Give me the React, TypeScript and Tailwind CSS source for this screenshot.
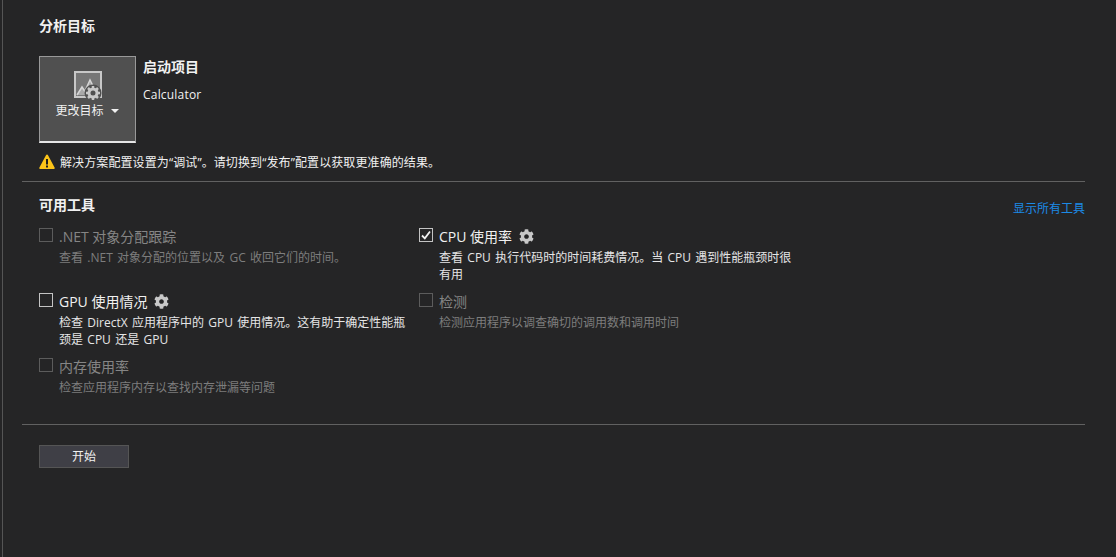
import React from "react";
import { FaCog } from "react-icons/fa";

const FONT = "font-['Open_Sans','Noto_Sans_CJK_SC',sans-serif]";

type Tool = {
  name: string;
  desc: React.ReactNode;
  enabled?: boolean;
  checked?: boolean;
  gear?: boolean;
};

const tools: Tool[] = [
  {
    name: ".NET 对象分配跟踪",
    desc: "查看 .NET 对象分配的位置以及 GC 收回它们的时间。",
  },
  {
    name: "CPU 使用率",
    desc: "查看 CPU 执行代码时的时间耗费情况。当 CPU 遇到性能瓶颈时很有用",
    enabled: true,
    checked: true,
    gear: true,
  },
  {
    name: "GPU 使用情况",
    desc: "检查 DirectX 应用程序中的 GPU 使用情况。这有助于确定性能瓶颈是 CPU 还是 GPU",
    enabled: true,
    gear: true,
  },
  {
    name: "检测",
    desc: "检测应用程序以调查确切的调用数和调用时间",
  },
  {
    name: "内存使用率",
    desc: "检查应用程序内存以查找内存泄漏等问题",
  },
];

const TargetIcon = () => (
  <svg width="30" height="30" viewBox="0 0 30 30" className="block">
    <rect x="3" y="1" width="26" height="25" fill="#767676" stroke="#c8c8c8" strokeWidth="2" />
    <path d="M5 24l5-8 3 4 5-11 6 12v3H5z" fill="#a8a8a8" />
    <path d="M5 24l5-8 4 6M13 20l5-11 6 12" fill="none" stroke="#d6d6d6" strokeWidth="1.500" />
    <circle cx="21" cy="22" r="8.500" fill="#505050" />
    <circle cx="21" cy="22" r="4" fill="#505050" stroke="#c8c8c8" strokeWidth="3" />
    <path
      d="M21 15v3M21 26v3M14 22h3M25 22h3M16 17l2 2M24 25l2 2M26 17l-2 2M18 25l-2 2"
      stroke="#c8c8c8"
      strokeWidth="2.500"
    />
  </svg>
);

const WarningIcon = () => (
  <svg width="16" height="16" viewBox="0 0 16 16" className="block shrink-0">
    <path d="M8 .5c.4 0 .7.2.9.6l6.800 12.700c.3.6-.1 1.200-.8 1.200H1.100c-.7 0-1.100-.6-.8-1.200L7.100 1.100C7.300.7 7.600.5 8 .5z" fill="#fcc419" />
    <rect x="7" y="5" width="2" height="5.500" fill="#1e1e1e" />
    <rect x="7" y="11.500" width="2" height="2" fill="#1e1e1e" />
  </svg>
);

const ToolOption = ({ tool }: { tool: Tool }) => {
  const titleColor = tool.enabled ? "text-[#f1f1f1]" : "text-[#858585]";
  const descColor = tool.enabled ? "text-[#e6e6e6]" : "text-[#7d7d7d]";

  return (
    <div className="flex h-[65px] items-start">
      <div
        className={`mt-[5px] flex h-[14px] w-[14px] shrink-0 items-center justify-center border ${
          tool.enabled ? "border-[#c4c4c4]" : "border-[#5c5c5c]"
        }`}
      >
        {tool.checked && (
          <svg width="10" height="10" viewBox="0 0 10 10">
            <path d="M1 5.500l2.800 2.800L9 1.500" fill="none" stroke="#f1f1f1" strokeWidth="1.800" />
          </svg>
        )}
      </div>
      <div className="ml-[6px] w-[353px]">
        <div className={`flex h-[26px] items-center text-[14px] ${titleColor}`}>
          <span>{tool.name}</span>
          {tool.gear && <FaCog className="ml-[7px] text-[#c8c8c8]" size={15} />}
        </div>
        <p className={`text-[12px] leading-[17px] [word-spacing:1.200px] ${descColor}`}>{tool.desc}</p>
      </div>
    </div>
  );
};

export default function App() {
  return (
    <div className={`h-[557px] w-[1116px] overflow-hidden bg-[#252526] ${FONT}`}>
      <div className="ml-[2px] h-full border-l border-[#555555] pl-[19px] pr-[31px]">
        <section className="pl-[17px] pt-[17px]">
          <h2 className="text-[14px] leading-[18px] font-bold text-[#f1f1f1]">分析目标</h2>
          <div className="mt-[21px] flex">
            <button className="flex h-[87px] w-[97px] flex-col items-center border border-b-2 border-[#999999] border-b-[#e6e6e6] bg-[#505050] pr-[1px] pt-[14px]">
              <TargetIcon />
              <span className="mt-[1px] flex items-center text-[12px] leading-[18px] text-[#f1f1f1]">
                更改目标
                <span className="ml-[7px] h-0 w-0 border-x-[4px] border-t-[4px] border-x-transparent border-t-[#f1f1f1]" />
              </span>
            </button>
            <div className="ml-[7px]">
              <div className="h-[21px] text-[14px] leading-[21px] font-bold text-[#f1f1f1]">启动项目</div>
              <div className="mt-[9px] text-[12px] leading-[18px] tracking-[0.2px] text-[#f1f1f1]">Calculator</div>
            </div>
          </div>
          <div className="mt-[11px] flex h-[16px] items-center">
            <WarningIcon />
            <span className="ml-[5px] pt-[2px] text-[12px] tracking-[0.1px] whitespace-nowrap text-[#f1f1f1]">
              解决方案配置设置为“调试”。请切换到“发布”配置以获取更准确的结果。
            </span>
          </div>
        </section>

        <hr className="mt-[11px] border-t border-[#616161]" />

        <section className="pl-[17px] pt-[14px]">
          <div className="flex items-start justify-between">
            <h2 className="text-[14px] leading-[18px] font-bold text-[#f1f1f1]">可用工具</h2>
            <a className="mt-[4px] text-[12px] leading-[18px] text-[#1c8ae6]">显示所有工具</a>
          </div>
          <div className="mt-[5px] grid grid-cols-[380px_380px]">
            {tools.map((tool) => (
              <ToolOption key={tool.name} tool={tool} />
            ))}
          </div>
        </section>

        <hr className="mt-[6px] border-t border-[#616161]" />

        <div className="pl-[17px] pt-[18px]">
          <button className="h-[23px] w-[90px] border border-[#555555] bg-[#3f3f46] pt-[2px] text-[12px] text-[#f1f1f1]">
            开始
          </button>
        </div>
      </div>
    </div>
  );
}
